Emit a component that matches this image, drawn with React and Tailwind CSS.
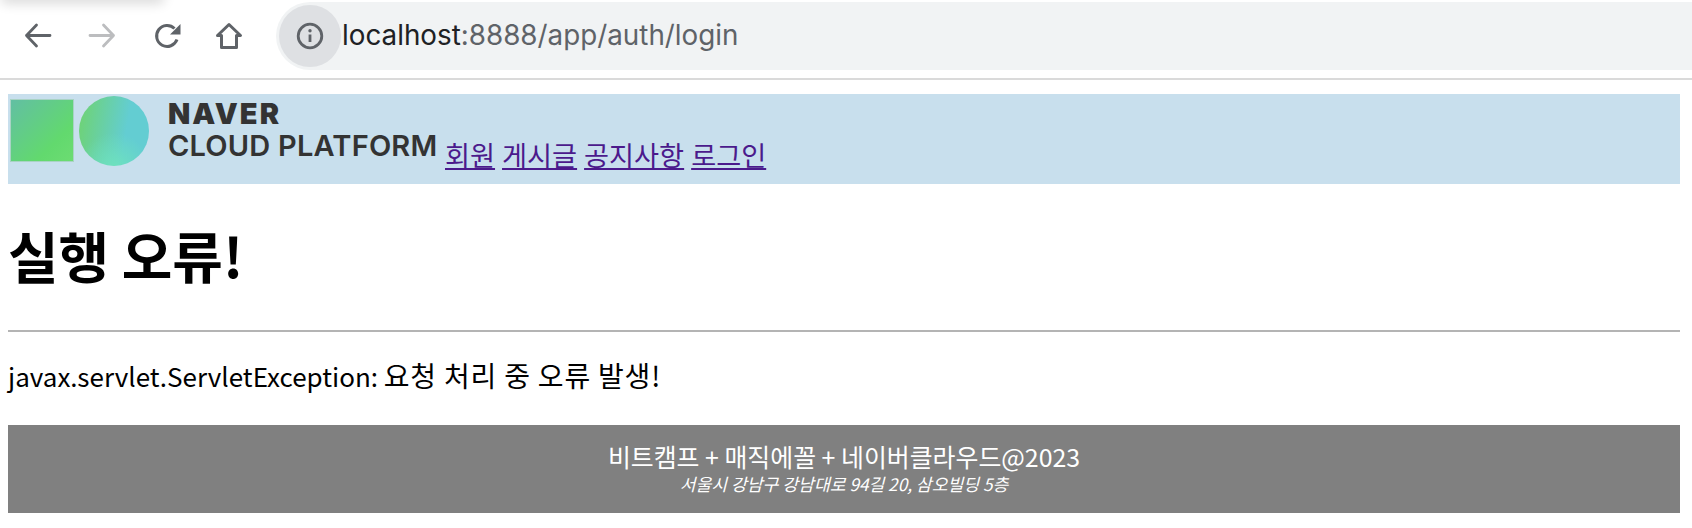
const kr = '"Noto Sans CJK KR", "Noto Sans", sans-serif';

function Toolbar() {
  return (
    <div className="relative flex h-[80px] items-center border-b-2 border-[#dadada] bg-white pb-[8px] pt-[2px]">
      <div className="absolute left-0 top-[-14px] h-[14px] w-[165px] rounded-full shadow-[0_4px_12px_rgba(0,0,0,0.14)]" />
      <div className="flex w-[276px] shrink-0 items-center">
        <svg className="ml-[24px]" width="28" height="28" viewBox="0 0 28 28" fill="none" stroke="#5f6368" strokeWidth="2.8" strokeLinecap="round" strokeLinejoin="round">
          <path d="M26 13.5H2.5M12.5 3L2.5 13.5L12.5 24" />
        </svg>
        <svg className="ml-[36px]" width="28" height="28" viewBox="0 0 28 28" fill="none" stroke="#bcbdbf" strokeWidth="2.8" strokeLinecap="round" strokeLinejoin="round">
          <path d="M2 13.5H25.5M15.5 3L25.5 13.5L15.5 24" />
        </svg>
        <svg className="ml-[38px]" width="28" height="28" viewBox="0 0 28 28" fill="none">
          <path d="M23 17.5A10.5 10.5 0 1 1 20.5 6.5" stroke="#5f6368" strokeWidth="3" />
          <path d="M26.5 2V12.5H16Z" fill="#5f6368" />
        </svg>
        <svg className="ml-[33px]" width="28" height="28" viewBox="0 0 28 28" fill="none" stroke="#5f6368" strokeWidth="3" strokeLinejoin="round">
          <path d="M14 2.5L25.5 13.5H21.5V25.5H6.5V13.5H2.5Z" />
        </svg>
      </div>
      <div className="flex h-[68px] min-w-0 flex-1 items-center rounded-l-[34px] bg-[#f1f3f4] pl-[3px]">
        <div className="flex h-[62px] w-[62px] shrink-0 items-center justify-center rounded-full bg-[#dee0e3]">
          <svg width="28" height="28" viewBox="0 0 28 28" fill="none">
            <circle cx="14" cy="14" r="11.8" stroke="#5f6368" strokeWidth="2.8" />
            <path d="M14 12.5V20" stroke="#5f6368" strokeWidth="2.8" />
            <circle cx="14" cy="8.8" r="1.7" fill="#5f6368" />
          </svg>
        </div>
        <div className="ml-[1px] text-[27.8px] leading-none" style={{ fontFamily: 'Inter, sans-serif' }}>
          <span className="text-[#202124]">localhost</span>
          <span className="text-[#5f6368]">:8888/app/auth/login</span>
        </div>
      </div>
    </div>
  );
}

function Logo() {
  return (
    <div className="flex h-[90px] w-[436px] shrink-0 items-start">
      <div className="ml-[2px] mt-[5px] h-[63px] w-[64px] border border-[#a9d3c4] bg-[linear-gradient(135deg,#62bfa3,#62d96e_70%,#6cdc72)]" />
      <div className="ml-[5px] mt-[2px] h-[70px] w-[70px] rounded-full bg-[radial-gradient(circle_at_50%_105%,#6fe3bd,transparent_45%),linear-gradient(100deg,#6fd36f,#63cdd2_65%)]" />
      <div className="ml-[19px] mt-[4px] text-[#333333]" style={{ fontFamily: 'Inter, sans-serif' }}>
        <div className="text-[29px] font-black leading-[32px] tracking-[2px]">NAVER</div>
        <div className="whitespace-nowrap text-[29px] font-semibold leading-[32px] tracking-[0.2px]">CLOUD PLATFORM</div>
      </div>
    </div>
  );
}

export default function App() {
  return (
    <div className="h-[528px] overflow-hidden bg-white text-black" style={{ fontFamily: kr }}>
      <Toolbar />
      <div className="ml-2 mr-3 mt-[14px]">
        <header className="flex h-[90px] items-start bg-[#c8dfed]">
          <Logo />
          <nav className="mt-[42px] flex gap-[7px] pl-[1px] text-[27.2px] leading-[36px] text-[#4b1a8c]">
            <a className="underline" href="#">회원</a>
            <a className="underline" href="#">게시글</a>
            <a className="underline" href="#">공지사항</a>
            <a className="underline" href="#">로그인</a>
          </nav>
        </header>
        <h1 className="mt-[32px] text-[55px] font-bold leading-[76px]">실행 오류!</h1>
        <hr className="mt-[38px] border-t-2 border-[#b4b4b4]" />
        <p className="mt-[24px] text-[26px] leading-[38px]">
          javax.servlet.ServletException: <span className="text-[28px] tracking-[0.8px]">요청 처리 중 오류 발생!</span>
        </p>
        <footer className="mt-[30px] flex h-[88px] flex-col items-center bg-[#808080] pt-[17px] text-white">
          <div className="text-[24.9px] leading-[28px]">비트캠프 + 매직에꼴 + 네이버클라우드@2023</div>
          <div className="text-[17.2px] italic leading-[28px]">서울시 강남구 강남대로 94길 20, 삼오빌딩 5층</div>
        </footer>
      </div>
    </div>
  );
}
